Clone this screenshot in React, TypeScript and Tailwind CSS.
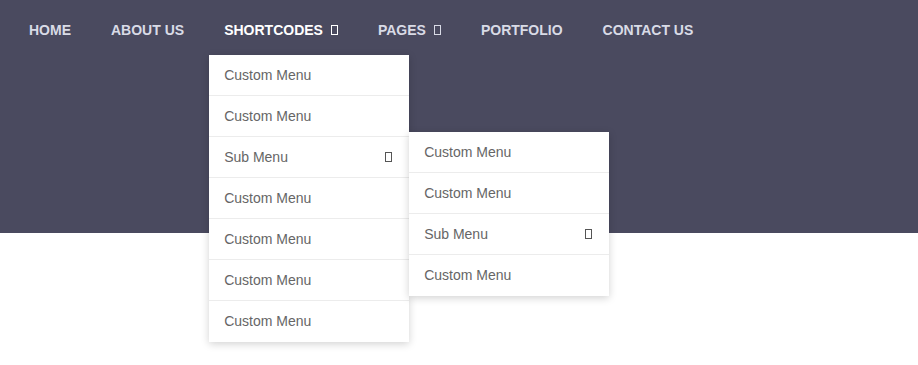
import React from 'react';

const Tofu = ({ className = '' }: { className?: string }) => (
  <span className={`inline-block h-[10px] w-[7px] border border-current ${className}`} />
);

const navItems = [
  { label: 'Home' },
  { label: 'About Us' },
  { label: 'Shortcodes', caret: true, active: true },
  { label: 'Pages', caret: true },
  { label: 'Portfolio' },
  { label: 'Contact Us' },
];

function MenuRow({ label, sub = false, last = false }: { label: string; sub?: boolean; last?: boolean }) {
  return (
    <li
      className={`flex h-[41px] items-center justify-between px-[15px] text-[14px] text-[#666666] ${
        last ? '' : 'border-b border-[#ececec]'
      }`}
    >
      <span>{label}</span>
      {sub && <Tofu className="mr-[2px] text-[#555]" />}
    </li>
  );
}

export default function App() {
  const first = ['Custom Menu', 'Custom Menu', 'Sub Menu', 'Custom Menu', 'Custom Menu', 'Custom Menu', 'Custom Menu'];
  const second = ['Custom Menu', 'Custom Menu', 'Sub Menu', 'Custom Menu'];

  return (
    <div className="h-[365px] w-full bg-white font-['Liberation_Sans',Arial,sans-serif]">
      <header className="h-[233px] bg-[#4a4a5f]">
        <nav className="flex h-[60px] items-stretch pl-[9px]">
          {navItems.map((item) => (
            <div key={item.label} className="relative flex items-center">
              <a
                className={`flex items-center gap-[8px] px-[20px] text-[14px] font-bold uppercase ${
                  item.active ? 'text-white' : 'text-[#d9dbe6]'
                }`}
              >
                {item.label}
                {item.caret && <Tofu />}
              </a>

              {item.active && (
                <ul className="absolute left-[5px] top-[55px] z-10 w-[200px] bg-white shadow-[0_2px_8px_rgba(0,0,0,0.18)]">
                  {first.map((label, i) => (
                    <MenuRow key={i} label={label} sub={label === 'Sub Menu'} last={i === first.length - 1} />
                  ))}
                  <ul className="absolute left-[200px] top-[77px] w-[200px] bg-white shadow-[0_2px_8px_rgba(0,0,0,0.18)]">
                    {second.map((label, i) => (
                      <MenuRow key={i} label={label} sub={label === 'Sub Menu'} last={i === second.length - 1} />
                    ))}
                  </ul>
                </ul>
              )}
            </div>
          ))}
        </nav>
      </header>
    </div>
  );
}
